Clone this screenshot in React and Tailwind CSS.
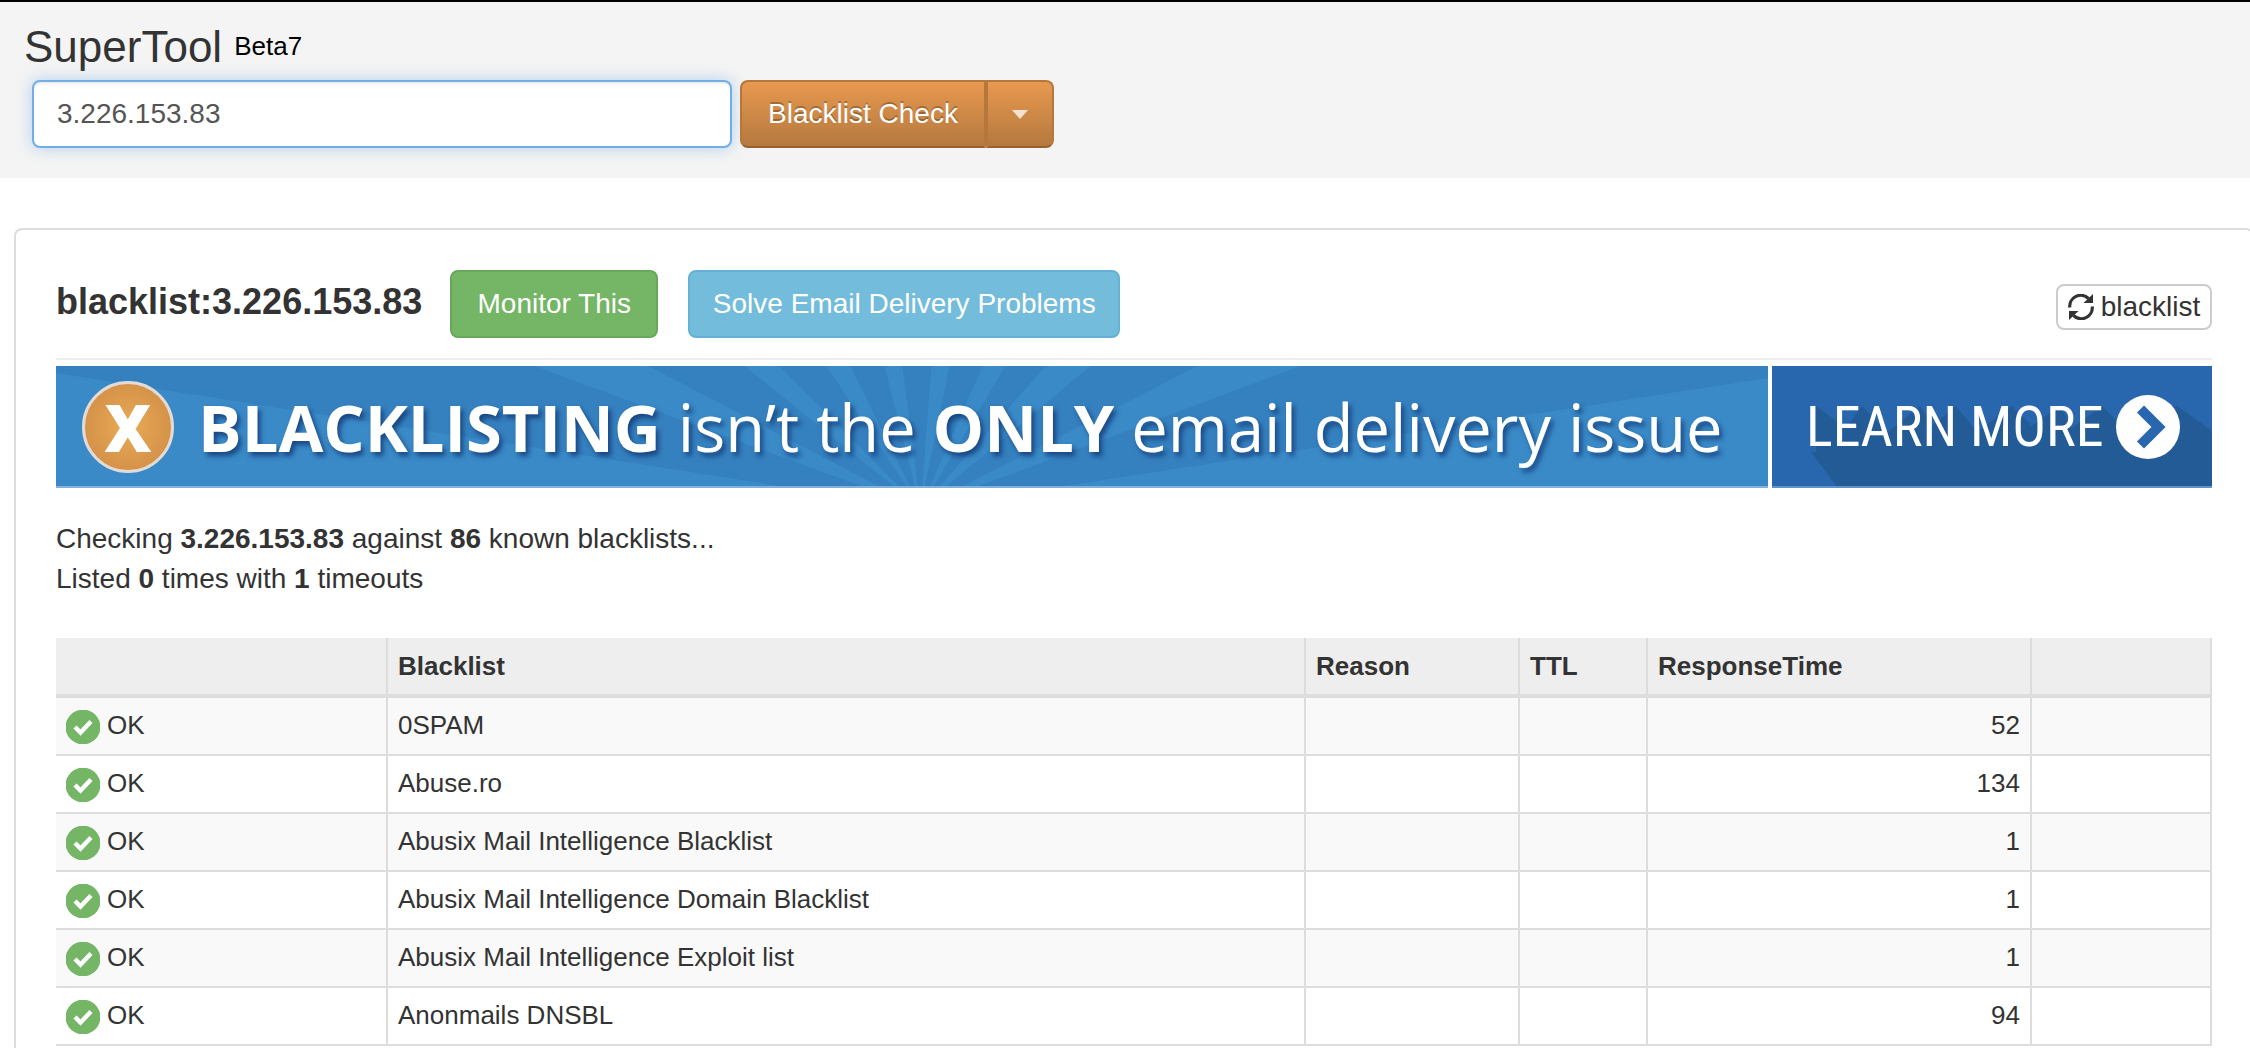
const listings = [
  { name: "0SPAM", time: 52 },
  { name: "Abuse.ro", time: 134 },
  { name: "Abusix Mail Intelligence Blacklist", time: 1 },
  { name: "Abusix Mail Intelligence Domain Blacklist", time: 1 },
  { name: "Abusix Mail Intelligence Exploit list", time: 1 },
  { name: "Anonmails DNSBL", time: 94 },
];

// top edge of each sunburst ray, they all meet below the banner
const rays = [
  [478, 592],
  [688, 723],
  [770, 794],
  [828, 846],
  [875, 893],
  [926, 949],
  [989, 1034],
  [1141, 1244],
];

const RefreshIcon = () => (
  <svg viewBox="0 0 26 26" className="h-[26px] w-[26px]" aria-hidden="true">
    <path d="M1.8 13.5A11 11 0 0 1 20.5 4.5" fill="none" stroke="#333" strokeWidth="3.2" />
    <path d="M25 0v9h-9.5z" fill="#333" />
    <path d="M24.2 12.5A11 11 0 0 1 5.5 21.5" fill="none" stroke="#333" strokeWidth="3.2" />
    <path d="M1 26v-9h9.5z" fill="#333" />
  </svg>
);

const OkIcon = () => (
  <svg viewBox="0 0 34 34" className="h-[34px] w-[34px]" aria-hidden="true">
    <circle cx="17" cy="17" r="17.4" fill="#74b566" />
    <path d="M9 17l5.5 5.5L25 11.5" fill="none" stroke="#fff" strokeWidth="4.4" />
  </svg>
);

const SearchBar = () => (
  <header className="border-t-2 border-black bg-[#f4f4f4] pt-[15px] pb-[30px] pl-6">
    <div className="flex h-[63px] items-start gap-3">
      <h1 className="text-[44px] leading-[60px]">SuperTool</h1>
      <span className="text-[26px] leading-[58px] text-black">Beta7</span>
    </div>
    <form className="ml-2 flex gap-2" onSubmit={(e) => e.preventDefault()}>
      <input
        type="text"
        aria-label="Address to look up"
        defaultValue="3.226.153.83"
        className="h-[68px] w-[700px] rounded-lg border-2 border-[#72aee6] bg-white px-[23px] text-[28px] text-[#555] shadow-[inset_0_2px_2px_rgba(0,0,0,0.08),0_0_16px_rgba(114,174,230,0.5)] outline-none"
      />
      <div className="flex h-[68px] text-white">
        <button
          type="submit"
          className="w-[246px] rounded-l-lg border-2 border-[#b5773c] border-b-[#99612f] bg-linear-to-b from-[#e8994f] to-[#b5793f] text-[28px] [text-shadow:0_-2px_0_rgba(0,0,0,0.25)]"
        >
          Blacklist Check
        </button>
        <button
          type="button"
          aria-label="Choose another lookup"
          className="grid w-[68px] place-items-center rounded-r-lg border-2 border-[#b5773c] border-b-[#99612f] bg-linear-to-b from-[#e8994f] to-[#b5793f]"
        >
          <svg viewBox="0 0 16 9" className="h-[9px] w-4" aria-hidden="true">
            <path d="M0 0h16L8 9z" fill="#f3e2d2" />
          </svg>
        </button>
      </div>
    </form>
  </header>
);

const Banner = () => (
  <a href="#learn-more" className="mt-1.5 flex h-[122px] gap-1 text-white">
    <div className="relative flex-1 overflow-hidden bg-[#3580bf]">
      <svg viewBox="0 0 1711 122" preserveAspectRatio="none" className="absolute inset-0 h-full w-full" aria-hidden="true">
        <g fill="#3a8ac8">
          <path d="M0 7L864 142L0 142z" />
          <path d="M1711 12L864 142L1711 142z" />
          {rays.map(([from, to]) => (
            <path key={from} d={`M${from} 0H${to}L864 142z`} />
          ))}
        </g>
        <path d="M0 121h1711" stroke="#7fb1dc" strokeWidth="2" />
      </svg>
      <div className="relative flex h-full items-center gap-6 pl-[26px] font-['Open_Sans',sans-serif]">
        <span className="grid h-[92px] w-[92px] shrink-0 place-items-center rounded-full border-[3px] border-[#e3dcd6] bg-radial from-[#e9ab55] to-[#cd8845] text-[65px] leading-[80px] font-extrabold">
          X
        </span>
        <span className="text-[65px] leading-[118px] whitespace-nowrap [text-shadow:3px_4px_5px_rgba(15,50,110,0.75)]">
          <b>BLACKLISTING</b> isn’t the <b>ONLY</b> email delivery issue
        </span>
      </div>
    </div>
    <div className="relative w-[440px] overflow-hidden bg-[#2867ad]">
      <svg viewBox="0 0 440 122" preserveAspectRatio="none" className="absolute inset-0 h-full w-full" aria-hidden="true">
        <path
          d="M39 86L66 122H440V65L405 40L352 62L330 40L300 62L288 40L260 60L240 40L205 66L184 40L160 60L148 40L116 66L90 40L74 62L44 40V86z"
          fill="#225b96"
        />
        <path d="M0 121h440" stroke="#5f93c8" strokeWidth="2" />
      </svg>
      <div className="relative flex h-full items-center justify-between pr-8 pl-[34px]">
        <span className="font-['Roboto_Condensed','Roboto',sans-serif] text-[56px] leading-[120px] whitespace-nowrap">LEARN MORE</span>
        <svg viewBox="0 0 64 64" className="h-16 w-16" aria-hidden="true">
          <circle cx="32" cy="32" r="32" fill="#fff" />
          <path d="M24.5 14L42.5 32L24.5 50" fill="none" stroke="#2867ad" strokeWidth="10" />
        </svg>
      </div>
    </div>
  </a>
);

const headCell = "border-r-2 border-b-4 border-[#ddd] px-2.5 text-left font-bold";
const cell = "border-r-2 border-b-2 border-[#ddd] px-2.5";

const ResultTable = () => (
  <table className="mt-[39px] w-full table-fixed border-separate border-spacing-0 text-[26px] leading-9">
    <thead>
      <tr className="h-[60px] bg-[#eee]">
        <th className={`${headCell} w-[332px]`} aria-label="Status" />
        <th className={headCell}>Blacklist</th>
        <th className={`${headCell} w-[214px]`}>Reason</th>
        <th className={`${headCell} w-[128px]`}>TTL</th>
        <th className={`${headCell} w-[384px]`}>ResponseTime</th>
        <th className={`${headCell} w-[180px]`} aria-label="Actions" />
      </tr>
    </thead>
    <tbody>
      {listings.map((row) => (
        <tr key={row.name} className="h-[58px] odd:bg-[#f9f9f9]">
          <td className={`${cell} pt-0.5`}>
            <div className="flex items-center gap-[7px]">
              <OkIcon />
              <span className="pb-1">OK</span>
            </div>
          </td>
          <td className={`${cell} pb-0.5`}>{row.name}</td>
          <td className={cell} />
          <td className={cell} />
          <td className={`${cell} pb-0.5 text-right`}>{row.time}</td>
          <td className={cell} />
        </tr>
      ))}
    </tbody>
  </table>
);

export default function App() {
  return (
    <div className="flex min-h-screen flex-col overflow-x-hidden bg-white font-['Liberation_Sans',Arial,sans-serif] text-[#333]">
      <SearchBar />
      <main className="mt-[50px] -mr-1 ml-3.5 flex-1 rounded-t-lg border-2 border-b-0 border-[#ddd] px-10 pt-10">
        <div className="flex items-center border-b-2 border-[#eee] pb-5">
          <h2 className="pb-1 text-[36px] leading-[40px] font-bold">blacklist:3.226.153.83</h2>
          <button type="button" className="ml-7 h-[68px] w-[208px] rounded-lg border-2 border-[#67a85a] bg-[#74b566] text-[28px] text-white">
            Monitor This
          </button>
          <button type="button" className="ml-[30px] h-[68px] w-[432px] rounded-lg border-2 border-[#63b2d6] bg-[#74bcdb] text-[28px] text-white">
            Solve Email Delivery Problems
          </button>
          <button type="button" className="mt-1.5 ml-auto flex h-[46px] w-[156px] items-center justify-center gap-[7px] rounded-lg border-2 border-[#ccc] text-[28px]">
            <RefreshIcon />
            blacklist
          </button>
        </div>
        <Banner />
        <div className="mt-[31px] text-[28px] leading-10">
          <p>
            Checking <b>3.226.153.83</b> against <b>86</b> known blacklists...
          </p>
          <p>
            Listed <b>0</b> times with <b>1</b> timeouts
          </p>
        </div>
        <ResultTable />
      </main>
    </div>
  );
}
